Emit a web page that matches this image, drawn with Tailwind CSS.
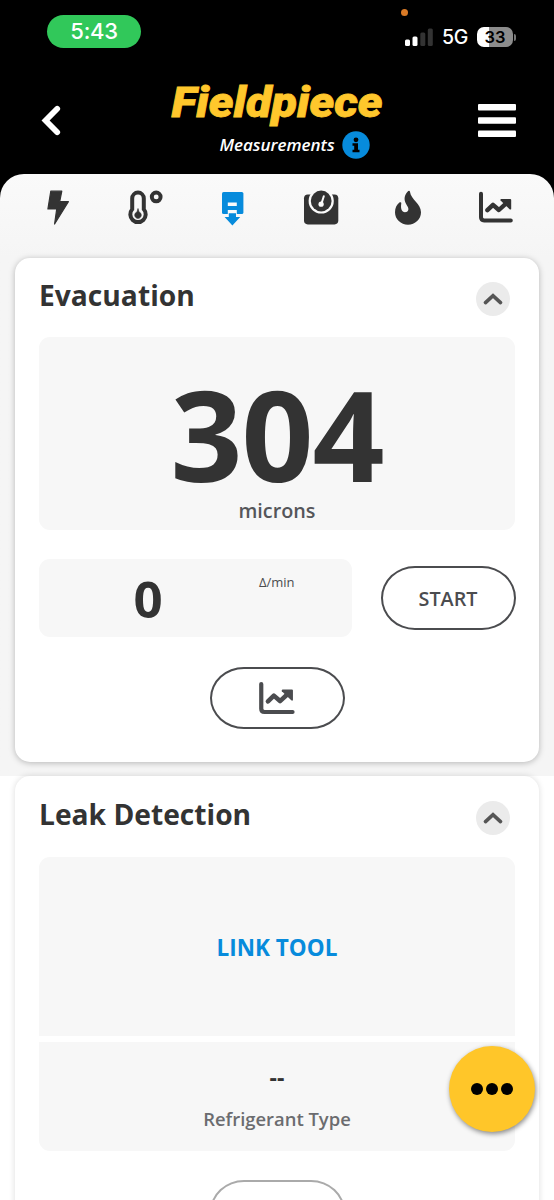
<!DOCTYPE html>
<html lang="en">
<head>
<meta charset="utf-8">
<title>Measurements</title>
<script src="https://cdn.jsdelivr.net/npm/@tailwindcss/browser@4"></script>
</head>
<body class="bg-black font-['Open_Sans',sans-serif] text-[#333]">
<svg class="hidden">
  <symbol id="chart" viewBox="0 0 40 40">
    <path d="M5 5.7V29.3Q5 32.4 8.1 32.4H34.8" fill="none" stroke="currentColor" stroke-width="4" stroke-linecap="round"/>
    <path d="M11.4 22.2L17 16.8L22.9 22L31 14.6" fill="none" stroke="currentColor" stroke-width="4.4" stroke-linecap="round" stroke-linejoin="round"/>
    <path d="M25.2 11H34.2Q35.2 11 35.2 12V21Q34.6 22 33.6 21.2L24.6 12.6Q24 11.4 25.2 11Z" fill="currentColor"/>
  </symbol>
</svg>
<div class="relative flex h-[1200px] w-[554px] flex-col overflow-hidden bg-black">
  <header class="h-[174px] shrink-0 text-white">
    <div class="flex h-[62px] items-start justify-between pl-[47px] pr-[38px] pt-[15px]">
      <div class="flex h-[33px] w-[94px] items-center justify-center rounded-full bg-[#31c85a] font-['Inter',sans-serif] text-[22px] font-medium tracking-[-0.3px]">5:43</div>
      <div class="relative mt-[11px] flex h-[22px] items-center">
        <span class="absolute -left-[4px] -top-[17px] size-[7px] rounded-full bg-[#d97a26]"></span>
        <svg class="w-[28px]" height="20" viewBox="0 0 28 20"><rect x="0" y="12.5" width="5" height="6.5" rx="1.5" fill="#fff"/><rect x="7.5" y="9.5" width="5" height="9.5" rx="1.5" fill="#fff"/><rect x="15.3" y="5.5" width="5" height="13.5" rx="1.5" fill="#333"/><rect x="22.8" y="1.5" width="5" height="17.5" rx="1.5" fill="#333"/></svg>
        <span class="ml-[9px] mt-[2px] w-[27px] font-['Inter',sans-serif] text-[19.5px] font-medium leading-none tracking-[-0.3px]">5G</span>
        <div class="ml-[8px] flex h-[20px] w-[36px] items-center justify-center rounded-[7px] bg-linear-to-r from-white from-33% to-[#8c8c8c] to-33% font-['Inter',sans-serif] text-[16.5px] font-semibold leading-none text-black">33</div>
        <span class="ml-[1px] h-[7px] w-[2px] rounded-r-full bg-[#777]"></span>
      </div>
    </div>
    <div class="flex h-[112px] items-start justify-between pl-[40px] pr-[38px]">
      <svg class="mt-[43px]" width="22" height="32" viewBox="0 0 22 32"><path d="M17.2 3.8L5.6 15.5L17.2 27.2" fill="none" stroke="#fff" stroke-width="5.8" stroke-linecap="round" stroke-linejoin="miter"/></svg>
      <div class="ml-[15px] flex w-[220px] flex-col items-center pt-[20px]">
        <svg class="block overflow-visible" width="220" height="49" viewBox="0 0 220 49"><text x="3.5" y="35.3" font-family="Roboto" font-weight="900" font-style="italic" font-size="42" textLength="211" lengthAdjust="spacingAndGlyphs" fill="#ffc72c" stroke="#ffc72c" stroke-width="0.8">Fieldpiece</text></svg>
        <div class="ml-[34px] flex h-[28px] items-center gap-[7px]">
          <span class="whitespace-nowrap text-[17px] font-semibold italic">Measurements</span>
          <svg width="28" height="28" viewBox="0 0 28 28"><circle cx="14" cy="14" r="13.7" fill="#078bdc"/><circle cx="14" cy="8.8" r="2.4"/><path d="M10.5 12.2H16V18.8H17.5V21.3H10.5V18.8H12.2V14.7H10.5Z"/></svg>
        </div>
      </div>
      <svg class="mt-[42px]" width="38" height="34" viewBox="0 0 38 34" fill="#fff"><rect width="38" height="6.5" rx="1"/><rect y="13.2" width="38" height="6.5" rx="1"/><rect y="26.5" width="38" height="6.5" rx="1"/></svg>
    </div>
  </header>
  <main class="flex grow flex-col rounded-t-[24px] bg-linear-to-b from-[#fafafa] from-0% via-[#f5f5f5] via-[84px] to-[#f5f5f5]">
    <nav class="mx-[14.5px] grid h-[84px] shrink-0 grid-cols-6 justify-items-center pt-[14px]">
      <svg width="40" height="40" viewBox="0 0 40 40"><path d="M12.8 3.2H23.8L21.7 13.7H30.4L16.6 36L18.7 21H9.9Z" fill="#333" stroke="#333" stroke-width="1.2" stroke-linejoin="round"/></svg>
      <svg width="40" height="40" viewBox="0 0 40 40"><path d="M6.2 10.4A5.8 5.8 0 0 1 17.8 10.4V21.3A7.7 7.7 0 1 1 6.2 21.3Z" fill="none" stroke="#333" stroke-width="4"/><path d="M12 20.5L13 24A3.3 3.3 0 1 1 11 24Z" fill="#333" stroke="#333" stroke-width=".6"/><circle cx="30.2" cy="8.9" r="4.4" fill="none" stroke="#333" stroke-width="3.9"/></svg>
      <svg width="40" height="40" viewBox="0 0 40 40"><rect x="9" y="4" width="21.4" height="22" rx="1.6" fill="#078bdc"/><path d="M14.8 14.4H23.8V18H14.8ZM14.8 22H23.8V26.2H14.8Z" fill="#fafafa"/><path d="M15.8 25.2H23V29H27.2L19.4 37.6L11.6 29H15.8Z" fill="#078bdc"/></svg>
      <svg width="40" height="40" viewBox="0 0 40 40"><rect x="3" y="6.4" width="34.3" height="30" rx="3.8" fill="#333"/><circle cx="20.2" cy="13" r="12.6" fill="#fafafa"/><circle cx="20.2" cy="13" r="10.4" fill="#333"/><path d="M22.8 8.2L20.5 15.5" stroke="#fafafa" stroke-width="2" stroke-linecap="round"/><circle cx="20.1" cy="16.2" r="2.6" fill="#fafafa"/></svg>
      <svg width="40" height="40" viewBox="0 0 40 40"><path d="M20.2 3.1Q21.5 2 21.9 3.6C23 12 33 15.5 33 24.3C33 31.4 27.2 36.7 20 36.7C12.8 36.7 7 31.4 7 24.3C7 20 8.6 16.6 11.7 14.3Q13.5 13.7 13.3 15.6C12.4 20.5 13.8 24.2 17 24.2C20.4 24.2 21.3 21 19.4 18.2C16.2 13.5 14.8 8.8 20.2 3.1Z" fill="#333"/></svg>
      <svg width="40" height="40"><use href="#chart"/></svg>
    </nav>
    <section class="mx-[15px] h-[503.5px] shrink-0 rounded-[15px] bg-white px-[24px] shadow-[0_1px_6px_rgba(0,0,0,0.26)]">
      <div class="flex h-[79px] items-start justify-between pr-[5px]">
        <h2 class="mt-[17px] text-[28.2px] font-bold leading-[40px]">Evacuation</h2>
        <div class="mt-[24px] flex size-[34px] items-center justify-center rounded-full bg-[#ebebeb]"><svg width="20" height="14" viewBox="0 0 20 14"><path d="M2.5 10.6L10 3.6L17.5 10.6" fill="none" stroke="#555" stroke-width="3.6" stroke-linecap="round"/></svg></div>
      </div>
      <div class="flex h-[193px] w-[476px] flex-col items-center rounded-[11px] bg-[#f7f7f7]">
        <div class="mt-[37px] h-[123px] text-[126px] font-bold leading-[119px] tracking-[-1px]">304</div>
        <div class="text-[19.8px] font-semibold leading-[28px] text-[#55565a]">microns</div>
      </div>
      <div class="mt-[29px] flex h-[78px] w-[476.5px] items-center justify-between">
        <div class="flex h-[78px] w-[313px] rounded-[11px] bg-[#f7f7f7]">
          <div class="w-[218px] text-center text-[51px] font-bold leading-[79px]">0</div>
          <div class="ml-[2px] pt-[14px] text-[13px] leading-[18px] text-[#4b4c4f]">Δ/min</div>
        </div>
        <button class="h-[64px] w-[135px] rounded-[34px/50%] border-2 border-[#4b4c4f] pt-[1px] text-[19.8px] font-semibold text-[#4b4c4f]">START</button>
      </div>
      <div class="mt-[30px] flex w-[476px] justify-center">
        <button class="flex h-[62px] w-[135px] items-center justify-center rounded-[34px/50%] border-2 border-[#4b4c4f] pt-[2px] text-[#4b4c4f]"><svg width="42" height="42"><use href="#chart"/></svg></button>
      </div>
    </section>
    <div class="mt-[14px] h-[425px] shrink-0 bg-white px-[15px]">
      <section class="h-[460px] rounded-[15px] bg-white px-[24px] shadow-[0_0_6px_rgba(0,0,0,0.14)]">
        <div class="flex h-[81.5px] items-start justify-between pr-[5px]">
          <h2 class="mt-[18px] text-[28.2px] font-bold leading-[40px]">Leak Detection</h2>
          <div class="mt-[25px] flex size-[34px] items-center justify-center rounded-full bg-[#ebebeb]"><svg width="20" height="14" viewBox="0 0 20 14"><path d="M2.5 10.6L10 3.6L17.5 10.6" fill="none" stroke="#555" stroke-width="3.6" stroke-linecap="round"/></svg></div>
        </div>
        <div class="flex h-[179px] w-[476px] items-center justify-center rounded-t-[11px] bg-[#f7f7f7] pt-[2px] text-[22.5px] font-bold text-[#078bdc]">LINK TOOL</div>
        <div class="mt-[6px] flex h-[109px] w-[476px] flex-col items-center rounded-b-[11px] bg-[#f7f7f7]">
          <div class="mt-[18px] text-[23px] font-bold leading-[34px]">--</div>
          <div class="mt-[11px] text-[18.4px] font-semibold leading-[28px] text-[#6b6c6f]">Refrigerant Type</div>
        </div>
        <div class="mt-[29px] flex w-[476px] justify-center"><div class="h-[63px] w-[135px] rounded-[34px/50%] border-2 border-[#aaa]"></div></div>
      </section>
    </div>
  </main>
  <button class="absolute left-[449px] top-[1046px] flex size-[86px] items-center justify-center gap-[2.5px] rounded-full bg-[#ffc629] shadow-[1px_2px_5px_rgba(0,0,0,0.45)]">
    <span class="size-[12.2px] rounded-full bg-black"></span><span class="size-[12.2px] rounded-full bg-black"></span><span class="size-[12.2px] rounded-full bg-black"></span>
  </button>
</div>
</body>
</html>
